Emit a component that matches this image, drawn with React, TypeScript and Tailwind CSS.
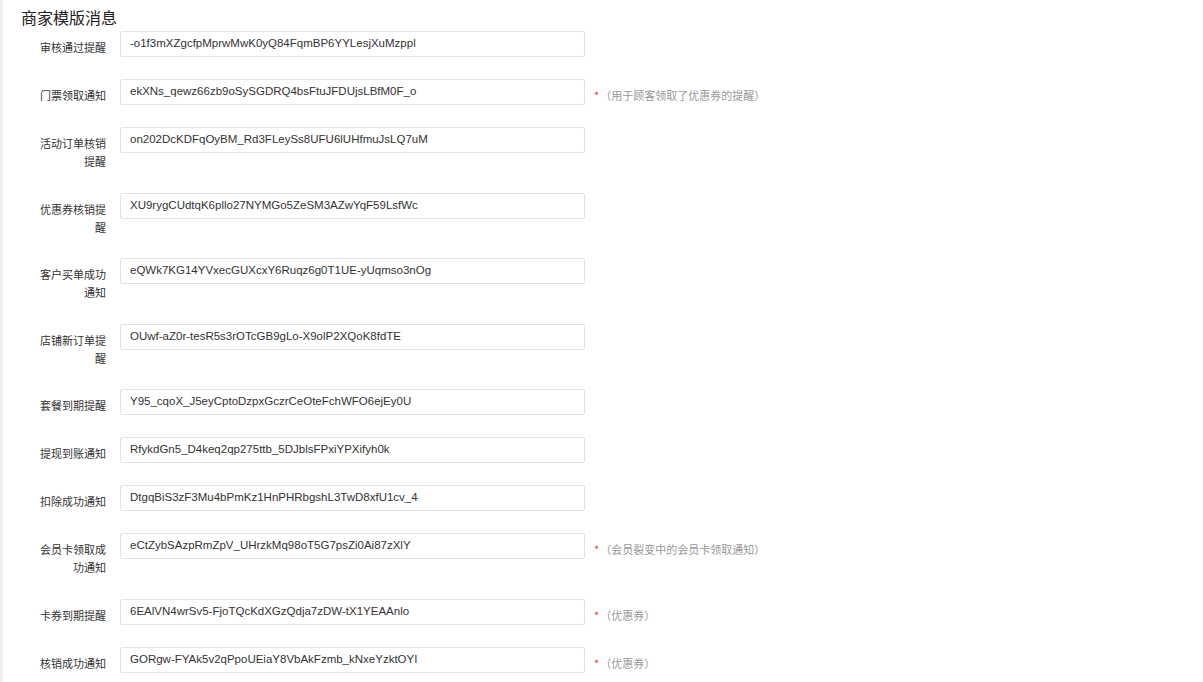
import React from "react";

type Row = { label: string; value: string; hint?: string };

const rows: Row[] = [
  { label: "审核通过提醒", value: "-o1f3mXZgcfpMprwMwK0yQ84FqmBP6YYLesjXuMzppl" },
  { label: "门票领取通知", value: "ekXNs_qewz66zb9oSySGDRQ4bsFtuJFDUjsLBfM0F_o", hint: "（用于顾客领取了优惠券的提醒）" },
  { label: "活动订单核销提醒", value: "on202DcKDFqOyBM_Rd3FLeySs8UFU6lUHfmuJsLQ7uM" },
  { label: "优惠券核销提醒", value: "XU9rygCUdtqK6pllo27NYMGo5ZeSM3AZwYqF59LsfWc" },
  { label: "客户买单成功通知", value: "eQWk7KG14YVxecGUXcxY6Ruqz6g0T1UE-yUqmso3nOg" },
  { label: "店铺新订单提醒", value: "OUwf-aZ0r-tesR5s3rOTcGB9gLo-X9olP2XQoK8fdTE" },
  { label: "套餐到期提醒", value: "Y95_cqoX_J5eyCptoDzpxGczrCeOteFchWFO6ejEy0U" },
  { label: "提现到账通知", value: "RfykdGn5_D4keq2qp275ttb_5DJblsFPxiYPXifyh0k" },
  { label: "扣除成功通知", value: "DtgqBiS3zF3Mu4bPmKz1HnPHRbgshL3TwD8xfU1cv_4" },
  { label: "会员卡领取成功通知", value: "eCtZybSAzpRmZpV_UHrzkMq98oT5G7psZi0Ai87zXlY", hint: "（会员裂变中的会员卡领取通知）" },
  { label: "卡券到期提醒", value: "6EAlVN4wrSv5-FjoTQcKdXGzQdja7zDW-tX1YEAAnlo", hint: "（优惠券）" },
  { label: "核销成功通知", value: "GORgw-FYAk5v2qPpoUEiaY8VbAkFzmb_kNxeYzktOYI", hint: "（优惠券）" },
];

const cjk = { fontFamily: '"Noto Sans CJK SC", "Noto Sans", sans-serif' };
const latin = { fontFamily: '"Liberation Sans", Arial, "Noto Sans CJK SC", sans-serif' };

export default function App() {
  return (
    <div className="w-full h-[682px] overflow-hidden bg-white flex">
      <div className="w-[3px] shrink-0 bg-[#f0f0f0]" />
      <div className="flex-1">
        <div className="pl-[18px] pt-[6px] h-[31px] text-[16px] leading-[22px] text-[#222]" style={cjk}>
          商家模版消息
        </div>
        {rows.map((r) => (
          <div key={r.label} className="flex items-start mb-[22px]">
            <div
              className="ml-[31px] w-[72px] text-right text-[11px] leading-[18.25px] pt-[7px] text-[#333] break-all"
              style={cjk}
            >
              {r.label}
            </div>
            <div
              className="ml-[14px] w-[465px] h-[26px] border border-[#e2e2e2] rounded-[2px] flex items-center pl-[9px] text-[11.5px] text-[#333] whitespace-nowrap overflow-hidden"
              style={latin}
            >
              {r.value}
            </div>
            {r.hint && (
              <div className="ml-[9px] pt-[7px] text-[11px] leading-[18px] flex items-start" style={cjk}>
                <span className="text-[#f03c3c] mr-[1px]">*</span>
                <span className="text-[#999]">{r.hint}</span>
              </div>
            )}
          </div>
        ))}
      </div>
    </div>
  );
}
